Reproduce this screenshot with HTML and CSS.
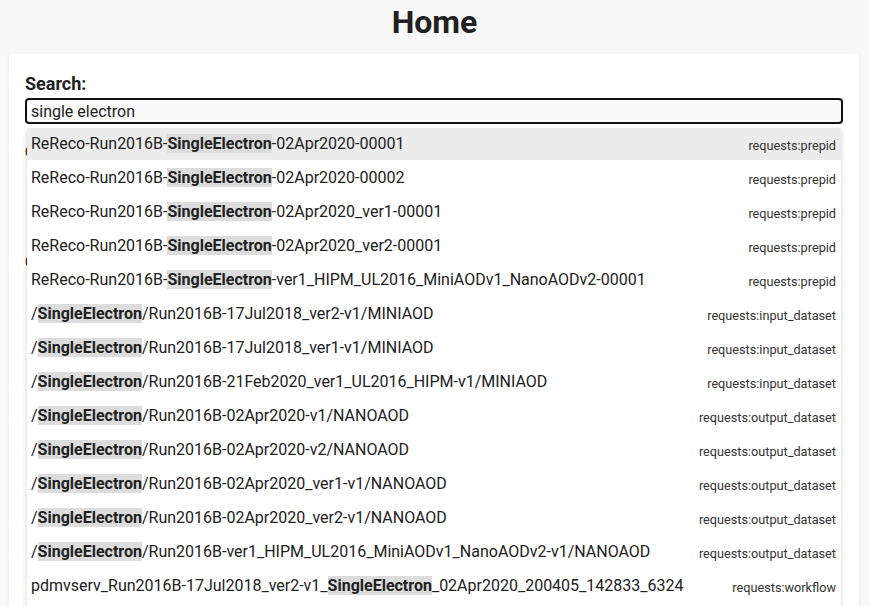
FILE: index.html
```html
<!DOCTYPE html>
<html lang="en">
<head>
<meta charset="utf-8">
<title>Home</title>
<link rel="stylesheet" href="styles.css">
</head>
<body>
<h1 class="title">Home</h1>
<main class="card">
  <label class="search-label" for="q">Search:</label>
  <div class="search-wrap">
    <input id="q" class="search-input" type="text" value="single electron" autofocus>
    <ul class="suggestions">
      <li class="item active"><span class="value">ReReco-Run2016B-<b class="hl">SingleElectron</b>-02Apr2020-00001</span><span class="attr">requests:prepid</span></li>
      <li class="item"><span class="value">ReReco-Run2016B-<b class="hl">SingleElectron</b>-02Apr2020-00002</span><span class="attr">requests:prepid</span></li>
      <li class="item"><span class="value">ReReco-Run2016B-<b class="hl">SingleElectron</b>-02Apr2020_ver1-00001</span><span class="attr">requests:prepid</span></li>
      <li class="item"><span class="value">ReReco-Run2016B-<b class="hl">SingleElectron</b>-02Apr2020_ver2-00001</span><span class="attr">requests:prepid</span></li>
      <li class="item"><span class="value">ReReco-Run2016B-<b class="hl">SingleElectron</b>-ver1_HIPM_UL2016_MiniAODv1_NanoAODv2-00001</span><span class="attr">requests:prepid</span></li>
      <li class="item"><span class="value">/<b class="hl">SingleElectron</b>/Run2016B-17Jul2018_ver2-v1/MINIAOD</span><span class="attr">requests:input_dataset</span></li>
      <li class="item"><span class="value">/<b class="hl">SingleElectron</b>/Run2016B-17Jul2018_ver1-v1/MINIAOD</span><span class="attr">requests:input_dataset</span></li>
      <li class="item"><span class="value">/<b class="hl">SingleElectron</b>/Run2016B-21Feb2020_ver1_UL2016_HIPM-v1/MINIAOD</span><span class="attr">requests:input_dataset</span></li>
      <li class="item"><span class="value">/<b class="hl">SingleElectron</b>/Run2016B-02Apr2020-v1/NANOAOD</span><span class="attr">requests:output_dataset</span></li>
      <li class="item"><span class="value">/<b class="hl">SingleElectron</b>/Run2016B-02Apr2020-v2/NANOAOD</span><span class="attr">requests:output_dataset</span></li>
      <li class="item"><span class="value">/<b class="hl">SingleElectron</b>/Run2016B-02Apr2020_ver1-v1/NANOAOD</span><span class="attr">requests:output_dataset</span></li>
      <li class="item"><span class="value">/<b class="hl">SingleElectron</b>/Run2016B-02Apr2020_ver2-v1/NANOAOD</span><span class="attr">requests:output_dataset</span></li>
      <li class="item"><span class="value">/<b class="hl">SingleElectron</b>/Run2016B-ver1_HIPM_UL2016_MiniAODv1_NanoAODv2-v1/NANOAOD</span><span class="attr">requests:output_dataset</span></li>
      <li class="item"><span class="value">pdmvserv_Run2016B-17Jul2018_ver2-v1_<b class="hl">SingleElectron</b>_02Apr2020_200405_142833_6324</span><span class="attr">requests:workflow</span></li>
      <li class="item"><span class="value">pdmvserv_Run2016B-17Jul2018_ver1-v1_<b class="hl">SingleElectron</b>_02Apr2020_200405_142840_1133</span><span class="attr">requests:workflow</span></li>
    </ul>
  </div>
  <section class="section">
    <h2 class="section-title">Objects:</h2>
    <ul class="links">
      <li>Requests</li>
      <li>Tickets</li>
      <li>Subcampaigns</li>
      <li>Processing strings</li>
    </ul>
  </section>
  <section class="section">
    <h2 class="section-title">Other:</h2>
    <ul class="links">
      <li>Statistics</li>
      <li>Dashboard</li>
      <li>Settings</li>
    </ul>
  </section>
</main>
</body>
</html>
```

FILE: styles.css
```css
* { box-sizing: border-box; }

html, body {
  margin: 0;
  padding: 0;
  background: #f8f8f8;
  font-family: Roboto, "Liberation Sans", sans-serif;
  color: #212121;
}

.title {
  margin: 3px 0 0;
  font-size: 32px;
  font-weight: 700;
  line-height: 38px;
  text-align: center;
  color: #212121;
}

.card {
  margin: 13px 10px 0 9px;
  padding: 19px 16px 40px;
  background: #fff;
  border-radius: 4px;
  box-shadow: 0 1px 3px rgba(0, 0, 0, 0.10);
  min-height: 600px;
}

.search-label {
  display: block;
  font-size: 18px;
  font-weight: 700;
  line-height: 21px;
  margin-bottom: 4px;
}

.search-wrap {
  position: relative;
}

.search-input {
  display: block;
  width: 100%;
  height: 26px;
  padding: 0 4px;
  border: 2px solid #111;
  border-radius: 4px;
  background: #fafafa;
  font-family: Roboto, "Liberation Sans", sans-serif;
  font-size: 16px;
  color: #212121;
  outline: none;
}

.suggestions {
  position: absolute;
  top: calc(100% + 4px);
  left: 2px;
  right: 2px;
  margin: 0;
  padding: 0;
  list-style: none;
  background: #fff;
  box-shadow: 0 2px 5px rgba(0, 0, 0, 0.18);
  z-index: 10;
}

.item {
  display: flex;
  align-items: flex-start;
  height: 32px;
  padding: 5px 5px 5px 4px;
  margin-bottom: 2px;
  font-size: 16px;
  line-height: 22px;
  color: #212121;
  white-space: nowrap;
}

.item.active {
  background: #ececec;
}

.hl {
  font-weight: 700;
  background: #dcdcdc;
}

.attr {
  margin-left: auto;
  padding-left: 12px;
  margin-top: 5px;
  font-size: 12.7px;
  line-height: 16px;
  color: #333;
}

.section {
  margin-top: 17px;
}

.section-title {
  margin: 0;
  font-size: 18px;
  font-weight: 700;
  line-height: 21px;
}

.links {
  margin: 8px 0 3px;
  padding-left: 24px;
  list-style: none;
  font-size: 16px;
  line-height: 16px;
}
```
